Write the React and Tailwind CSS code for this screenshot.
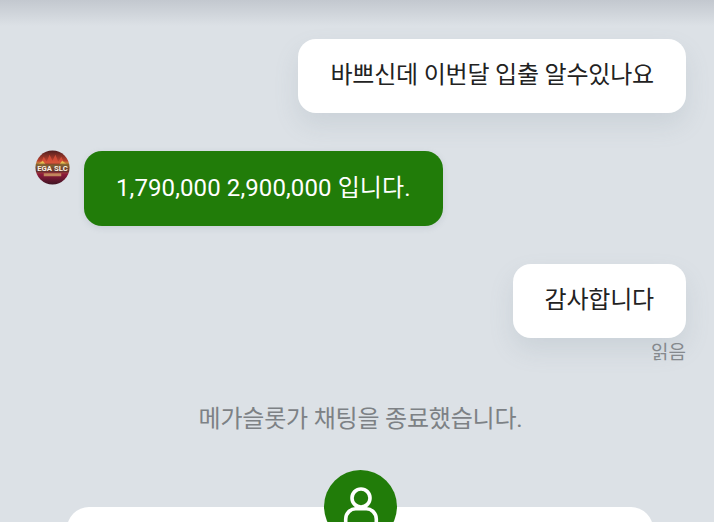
import React from "react";

const font = "font-['Roboto','Noto_Sans_CJK_KR',sans-serif]";

// round site logo shown next to agent messages
const AgentAvatar = () => (
  <svg width="35" height="35" viewBox="0 0 36 36" className="mt-[-1px] mr-[1px] shrink-0">
    <defs>
      <clipPath id="logoClip">
        <circle cx="18" cy="18" r="17.5" />
      </clipPath>
      <linearGradient id="logoBg" x1="0" y1="0" x2="0" y2="1">
        <stop offset="0" stopColor="#4a1c1e" />
        <stop offset="0.3" stopColor="#b8402c" />
        <stop offset="0.42" stopColor="#d8a845" />
        <stop offset="0.7" stopColor="#8c1a3a" />
        <stop offset="1" stopColor="#3b1422" />
      </linearGradient>
    </defs>
    <g clipPath="url(#logoClip)">
      <rect width="36" height="36" fill="url(#logoBg)" />
      <path d="M6 13l3-6 3 5 3-7 3 6 3-6 3 7 3-5 3 6-3 2H9z" fill="#d8503a" opacity="0.85" />
      <path d="M3 15l5-4 3 4zM33 15l-5-4-3 4z" fill="#e8bd50" />
      <rect x="0" y="14" width="36" height="9" fill="#20141a" opacity="0.45" />
      <text x="18" y="21.5" textAnchor="middle" fontSize="8" fontWeight="700" fill="#f8f0e2" fontFamily="Roboto, sans-serif">EGA SLC</text>
      <rect x="9" y="24" width="18" height="3" fill="#e0c070" opacity="0.65" />
    </g>
  </svg>
);

const MyBubble = ({ children }) => (
  <div className="flex justify-end">
    <div className="flex h-[74px] items-center rounded-[18px] bg-white px-[32px] pb-[2px] text-[24px] tracking-[-0.2px] text-[#222] shadow-[0_12px_24px_rgba(120,135,150,0.16)]">
      {children}
    </div>
  </div>
);

export default function App() {
  return (
    <div className={`${font} relative h-[522px] w-[714px] overflow-hidden bg-[#dce1e6]`}>
      {/* shadow dropped by the header above the message list */}
      <div className="h-[26px] bg-gradient-to-b from-[#c3c8cf] to-[#dce1e6]" />

      <div className="flex flex-col pl-[35px] pr-[28px] pt-[13px]">
        <MyBubble>바쁘신데 이번달 입출 알수있나요</MyBubble>

        <div className="mt-[38px] flex items-start gap-[13px]">
          <AgentAvatar />
          <div className="flex h-[75px] items-center rounded-[18px] bg-[#217c09] px-[32px] pb-[2px] text-[24px] tracking-[0.1px] text-white shadow-[0_2px_6px_rgba(120,135,150,0.2)]">
            1,790,000 2,900,000 입니다.
          </div>
        </div>

        <div className="mt-[38px]">
          <MyBubble>감사합니다</MyBubble>
        </div>
        <div className="mt-[2px] text-right text-[19px] leading-[26px] text-[#85898d]">읽음</div>

        <div className="mt-[37px] text-center text-[24px] leading-[32px] tracking-[-0.2px] text-[#7d8185]">
          메가슬롯가 채팅을 종료했습니다.
        </div>
      </div>

      {/* contact card with the round badge sitting on its top edge */}
      <div className="absolute left-[67px] top-[507px] h-[80px] w-[586px] rounded-[22px] bg-white" />
      <div className="absolute left-[324px] top-[470px] flex h-[73px] w-[73px] justify-center rounded-full bg-[#217c09] pt-[16px]">
        <svg width="38" height="40" viewBox="0 0 38 40" fill="none" stroke="white" strokeWidth="3.6">
          <circle cx="19" cy="12" r="9" />
          <path d="M3.7 38v-5c0-6 5-10.3 10-10.3h10.6c5 0 10 4.3 10 10.3v5z" strokeLinejoin="round" />
        </svg>
      </div>
    </div>
  );
}
